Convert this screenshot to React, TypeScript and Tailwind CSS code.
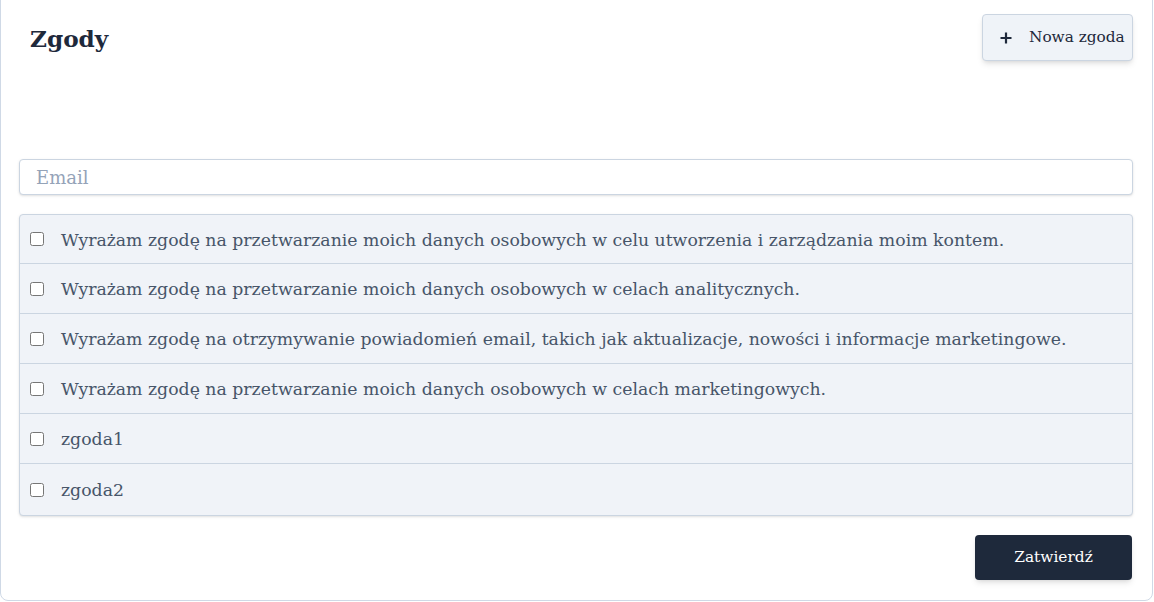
import React from "react";

const consents = [
  "Wyrażam zgodę na przetwarzanie moich danych osobowych w celu utworzenia i zarządzania moim kontem.",
  "Wyrażam zgodę na przetwarzanie moich danych osobowych w celach analitycznych.",
  "Wyrażam zgodę na otrzymywanie powiadomień email, takich jak aktualizacje, nowości i informacje marketingowe.",
  "Wyrażam zgodę na przetwarzanie moich danych osobowych w celach marketingowych.",
  "zgoda1",
  "zgoda2",
];

export default function App() {
  return (
    <div
      className="w-[1154px] h-[602px] overflow-hidden bg-white"
      style={{ fontFamily: '"DejaVu Serif", Georgia, serif' }}
    >
      <div className="-mt-[10px] w-[1153px] rounded-lg border border-[#cfd9e6] bg-white pl-[18px] pr-[19px] pt-[23px] pb-[20px]">
        <div className="flex items-start justify-between">
          <h1 className="ml-[11px] mt-[10px] text-[23.2px] font-bold leading-[30px] text-[#1e293b]">
            Zgody
          </h1>
          <button className="flex h-[47px] w-[151px] items-center rounded-[4px] border border-[#cbd5e1] bg-[#eff3f8] pl-[16px] text-[15.3px] text-[#1e293b] shadow-md">
            <svg width="14" height="14" viewBox="0 0 14 14" className="mr-[16px]">
              <path d="M7 1.5v11M1.5 7h11" stroke="#1e293b" strokeWidth="2.2" strokeLinecap="butt" />
            </svg>
            Nowa zgoda
          </button>
        </div>
        <div className="mt-[98px]">
          <input
            type="text"
            placeholder="Email"
            className="h-[36px] w-full rounded-[4px] border border-[#cbd5e1] bg-white px-[16px] pt-[1px] text-[18px] text-[#1e293b] shadow-sm outline-none placeholder:text-[#94a3b8]"
          />
        </div>
        <div className="mt-[19px] overflow-hidden rounded-[4px] border border-[#cbd5e1] bg-[#f0f3f8] shadow-sm divide-y divide-[#cbd5e1]">
          {consents.map((c, i) => (
            <label
              key={i}
              className={`flex items-center pl-[10px] ${i === 0 ? "h-[49px]" : i === consents.length - 1 ? "h-[51px]" : "h-[50px]"}`}
            >
              <input type="checkbox" className="h-[14px] w-[14px] m-0" />
              <span className="ml-[17px] pt-[3px] text-[17.3px] text-[#475569]">{c}</span>
            </label>
          ))}
        </div>
        <div className="mt-[19px] flex justify-end">
          <button className="mr-[1px] h-[45px] w-[157px] rounded-[4px] bg-[#1e293b] pt-[1px] text-[15.4px] text-white shadow-md">
            Zatwierdź
          </button>
        </div>
      </div>
    </div>
  );
}
